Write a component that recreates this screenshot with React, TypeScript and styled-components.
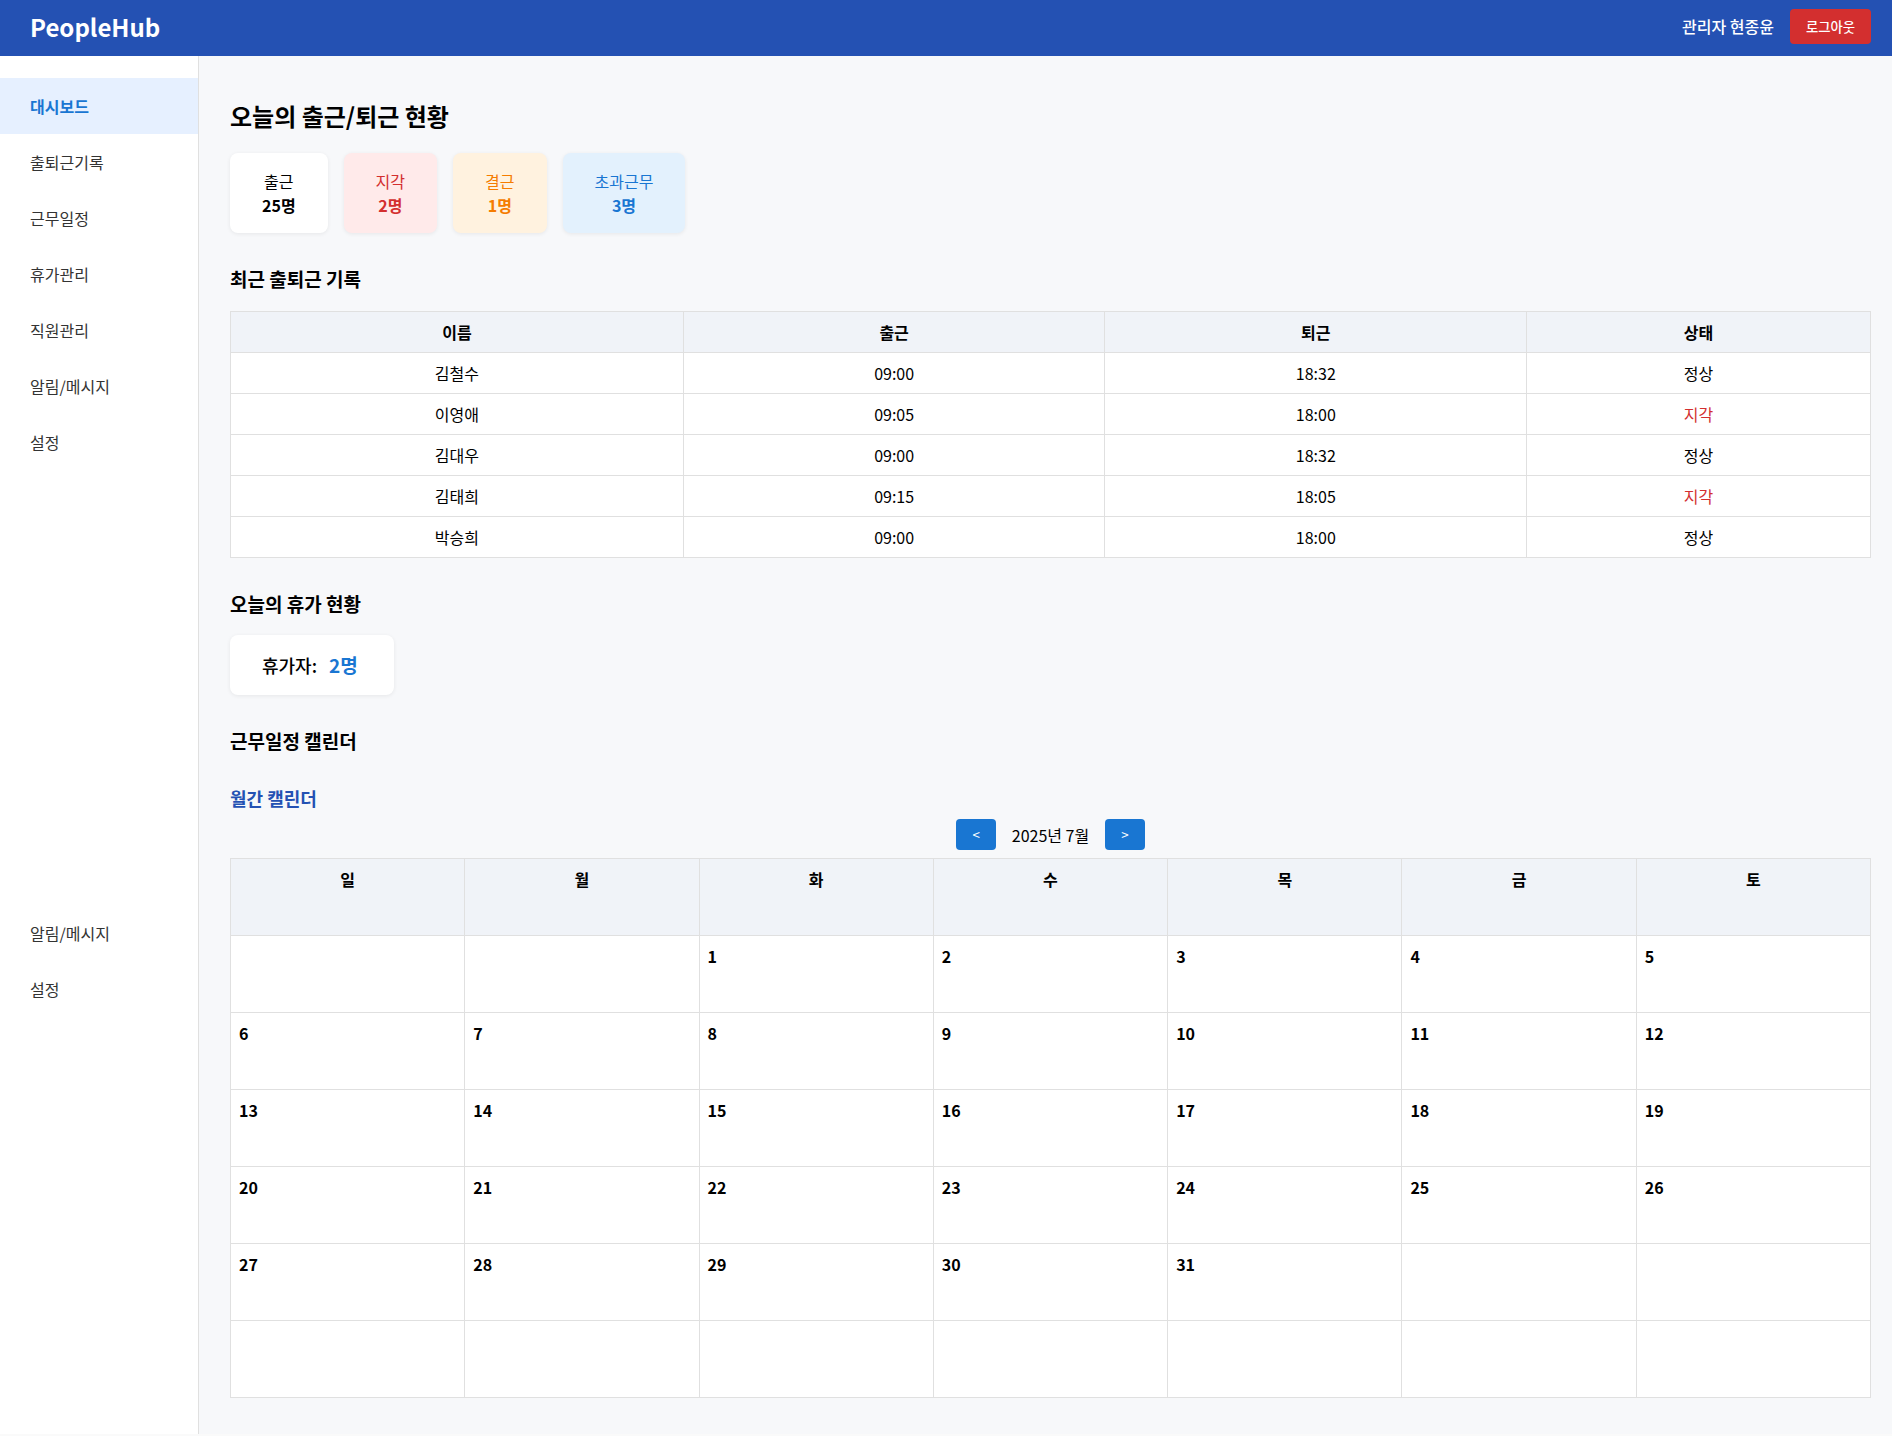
import React, { useState } from "react";
import styled, { createGlobalStyle } from "styled-components";

const GlobalStyle = createGlobalStyle`
  * { box-sizing: border-box; }
  body {
    margin: 0;
    background: #fafafa;
    color: #000;
    font: 16px/24px "Noto Sans CJK KR", "Noto Sans", sans-serif;
  }
  button { font-family: inherit; }
`;

const Header = styled.header`
  display: flex;
  justify-content: space-between;
  align-items: center;
  height: 56px;
  padding: 0 21px 3px 30px;
  background: #2451b3;
  color: #fff;
`;

const Logo = styled.div`
  font-size: 24px;
  line-height: 36px;
  font-weight: 700;
`;

const Account = styled.div`
  display: flex;
  align-items: center;
  gap: 16px;
  font-weight: 500;
  line-height: 23px;
`;

const LogoutButton = styled.button`
  padding: 8px 16px;
  border: 0;
  border-radius: 4px;
  background: #d32f2f;
  color: #fff;
  font-weight: 500;
  line-height: 19px;
  cursor: pointer;
`;

const Layout = styled.div`
  display: flex;
  min-height: calc(100vh - 58px);
`;

const Sidebar = styled.aside`
  flex: 0 0 199px;
  padding-top: 22px;
  background: #fff;
  border-right: 1px solid #e0e0e0;
`;

const Nav = styled.nav`
  display: flex;
  flex-direction: column;
  justify-content: space-between;
  min-height: 939px;
`;

const NavList = styled.ul`
  margin: 0;
  padding: 0;
  list-style: none;
`;

const NavLink = styled.a<{ $active?: boolean }>`
  display: block;
  padding: 16px 30px;
  background: ${(p) => (p.$active ? "#e6f0ff" : "transparent")};
  color: ${(p) => (p.$active ? "#1976d2" : "#333")};
  font-weight: ${(p) => (p.$active ? 700 : 400)};
  text-decoration: none;
`;

const Main = styled.main`
  flex: 1;
  min-width: 0;
  padding: 42px 21px 36px 31px;
  background: #f7f8fa;
`;

const PageTitle = styled.h1`
  margin: 0 0 19px;
  font-size: 24px;
  line-height: 36px;
`;

const SectionTitle = styled.h2`
  margin: 32px 0 18px;
  font-size: 19px;
  line-height: 27px;
`;

const CalendarTitle = styled.h3`
  margin: 31px 0 8px;
  color: #2451b3;
  font-size: 18px;
  line-height: 26px;
`;

const Cards = styled.div`
  display: flex;
  gap: 16px;
`;

const Card = styled.div<{ $bg?: string; $color?: string }>`
  padding: 16px 32px;
  border-radius: 8px;
  background: ${(p) => p.$bg ?? "#fff"};
  color: ${(p) => p.$color ?? "#000"};
  box-shadow: 0 1px 4px rgba(0, 0, 0, 0.07);
  text-align: center;
`;

const Count = styled.strong`
  display: block;
`;

const VacationCard = styled(Card)`
  display: inline-flex;
  align-items: center;
  gap: 12px;
  padding-right: 36px;
  font-size: 18px;
  font-weight: 500;
  line-height: 28px;
`;

const VacationCount = styled.strong`
  color: #1976d2;
  font-size: 19px;
`;

const Table = styled.table`
  width: 100%;
  margin-top: 19px;
  border-collapse: collapse;
  background: #fff;

  th,
  td {
    padding: 8px;
    border: 1px solid #e0e0e0;
    text-align: center;
  }
  th {
    background: #f0f3f8;
  }
`;

const StatusCell = styled.td<{ $late: boolean }>`
  color: ${(p) => (p.$late ? "#d32f2f" : "inherit")};
`;

const CalendarTable = styled(Table)`
  margin-top: 8px;
  table-layout: fixed;

  th,
  td {
    height: 77px;
    vertical-align: top;
  }
  td {
    text-align: left;
    font-weight: 700;
  }
`;

const MonthBar = styled.div`
  display: flex;
  justify-content: center;
  align-items: center;
  gap: 16px;
`;

const MonthButton = styled.button`
  padding: 6px 16px;
  border: 0;
  border-radius: 4px;
  background: #1976d2;
  color: #fff;
  line-height: 19px;
  cursor: pointer;
`;

const menu = ["대시보드", "출퇴근기록", "근무일정", "휴가관리", "직원관리", "알림/메시지", "설정"];
const footerMenu = ["알림/메시지", "설정"];

const summary = [
  { label: "출근", count: 25 },
  { label: "지각", count: 2, bg: "#ffeaea", color: "#d32f2f" },
  { label: "결근", count: 1, bg: "#fff2df", color: "#f57c00" },
  { label: "초과근무", count: 3, bg: "#e3f1fd", color: "#1976d2" },
];

const records = [
  ["김철수", "09:00", "18:32", "정상"],
  ["이영애", "09:05", "18:00", "지각"],
  ["김대우", "09:00", "18:32", "정상"],
  ["김태희", "09:15", "18:05", "지각"],
  ["박승희", "09:00", "18:00", "정상"],
];

const weekdays = ["일", "월", "화", "수", "목", "금", "토"];

function buildWeeks(year: number, month: number): (number | null)[][] {
  const offset = new Date(year, month, 1).getDay();
  const total = new Date(year, month + 1, 0).getDate();
  return Array.from({ length: 6 }, (_, week) =>
    Array.from({ length: 7 }, (_, day) => {
      const date = week * 7 + day - offset + 1;
      return date >= 1 && date <= total ? date : null;
    })
  );
}

function Calendar() {
  const [month, setMonth] = useState(new Date(2025, 6, 1));
  const move = (step: number) =>
    setMonth(new Date(month.getFullYear(), month.getMonth() + step, 1));

  return (
    <>
      <CalendarTitle>월간 캘린더</CalendarTitle>
      <MonthBar>
        <MonthButton type="button" aria-label="이전 달" onClick={() => move(-1)}>&lt;</MonthButton>
        <span>{`${month.getFullYear()}년 ${month.getMonth() + 1}월`}</span>
        <MonthButton type="button" aria-label="다음 달" onClick={() => move(1)}>&gt;</MonthButton>
      </MonthBar>
      <CalendarTable>
        <thead>
          <tr>{weekdays.map((d) => <th key={d} scope="col">{d}</th>)}</tr>
        </thead>
        <tbody>
          {buildWeeks(month.getFullYear(), month.getMonth()).map((week, i) => (
            <tr key={i}>{week.map((date, j) => <td key={j}>{date}</td>)}</tr>
          ))}
        </tbody>
      </CalendarTable>
    </>
  );
}

export default function App() {
  return (
    <>
      <GlobalStyle />
      <Header>
        <Logo>PeopleHub</Logo>
        <Account>
          <span>관리자 현종윤</span>
          <LogoutButton type="button">로그아웃</LogoutButton>
        </Account>
      </Header>
      <Layout>
        <Sidebar>
          <Nav>
            <NavList>
              {menu.map((item, i) => (
                <li key={item}><NavLink href="#" $active={i === 0}>{item}</NavLink></li>
              ))}
            </NavList>
            <NavList>
              {footerMenu.map((item) => (
                <li key={item}><NavLink href="#">{item}</NavLink></li>
              ))}
            </NavList>
          </Nav>
        </Sidebar>
        <Main>
          <PageTitle>오늘의 출근/퇴근 현황</PageTitle>
          <Cards>
            {summary.map((s) => (
              <Card key={s.label} $bg={s.bg} $color={s.color}>
                {s.label}
                <Count>{`${s.count}명`}</Count>
              </Card>
            ))}
          </Cards>

          <SectionTitle>최근 출퇴근 기록</SectionTitle>
          <Table>
            <thead>
              <tr>
                <th scope="col">이름</th>
                <th scope="col">출근</th>
                <th scope="col">퇴근</th>
                <th scope="col">상태</th>
              </tr>
            </thead>
            <tbody>
              {records.map(([name, start, end, status]) => (
                <tr key={name}>
                  <td>{name}</td>
                  <td>{start}</td>
                  <td>{end}</td>
                  <StatusCell $late={status === "지각"}>{status}</StatusCell>
                </tr>
              ))}
            </tbody>
          </Table>

          <SectionTitle>오늘의 휴가 현황</SectionTitle>
          <Cards>
            <VacationCard>
              <span>휴가자:</span>
              <VacationCount>2명</VacationCount>
            </VacationCard>
          </Cards>

          <SectionTitle>근무일정 캘린더</SectionTitle>
          <Calendar />
        </Main>
      </Layout>
    </>
  );
}
